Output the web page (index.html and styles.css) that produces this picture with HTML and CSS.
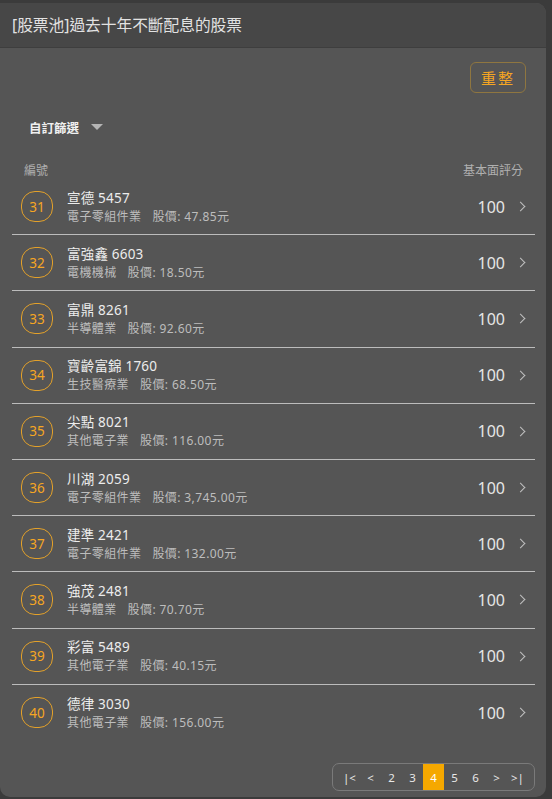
FILE: index.html
```html
<!DOCTYPE html>
<html lang="zh-Hant">
  <head>
    <meta charset="UTF-8" />
    <meta name="viewport" content="width=device-width, initial-scale=1.0" />
    <title>股票池</title>
    <link rel="stylesheet" href="styles.css">
  </head>
  <body>
    <div class="modal">
      <div class="modal-header">[股票池]過去十年不斷配息的股票</div>

      <div class="modal-body">
        <div class="toolbar">
          <button class="reset-btn">重整</button>
        </div>

        <div class="filter">
          <span>自訂篩選</span>
          <span class="caret"></span>
        </div>

        <div class="list-head">
          <span>編號</span>
          <span>基本面評分</span>
        </div>

        <ul class="stock-list">
          <li class="stock">
            <span class="rank">31</span>
            <div class="info">
              <div class="name">宣德 5457</div>
              <div class="meta">電子零組件業<span class="price">股價: 47.85元</span></div>
            </div>
            <span class="score">100</span>
            <span class="chevron"></span>
          </li>
          <li class="stock">
            <span class="rank">32</span>
            <div class="info">
              <div class="name">富強鑫 6603</div>
              <div class="meta">電機機械<span class="price">股價: 18.50元</span></div>
            </div>
            <span class="score">100</span>
            <span class="chevron"></span>
          </li>
          <li class="stock">
            <span class="rank">33</span>
            <div class="info">
              <div class="name">富鼎 8261</div>
              <div class="meta">半導體業<span class="price">股價: 92.60元</span></div>
            </div>
            <span class="score">100</span>
            <span class="chevron"></span>
          </li>
          <li class="stock">
            <span class="rank">34</span>
            <div class="info">
              <div class="name">寶齡富錦 1760</div>
              <div class="meta">生技醫療業<span class="price">股價: 68.50元</span></div>
            </div>
            <span class="score">100</span>
            <span class="chevron"></span>
          </li>
          <li class="stock">
            <span class="rank">35</span>
            <div class="info">
              <div class="name">尖點 8021</div>
              <div class="meta">其他電子業<span class="price">股價: 116.00元</span></div>
            </div>
            <span class="score">100</span>
            <span class="chevron"></span>
          </li>
          <li class="stock">
            <span class="rank">36</span>
            <div class="info">
              <div class="name">川湖 2059</div>
              <div class="meta">電子零組件業<span class="price">股價: 3,745.00元</span></div>
            </div>
            <span class="score">100</span>
            <span class="chevron"></span>
          </li>
          <li class="stock">
            <span class="rank">37</span>
            <div class="info">
              <div class="name">建準 2421</div>
              <div class="meta">電子零組件業<span class="price">股價: 132.00元</span></div>
            </div>
            <span class="score">100</span>
            <span class="chevron"></span>
          </li>
          <li class="stock">
            <span class="rank">38</span>
            <div class="info">
              <div class="name">強茂 2481</div>
              <div class="meta">半導體業<span class="price">股價: 70.70元</span></div>
            </div>
            <span class="score">100</span>
            <span class="chevron"></span>
          </li>
          <li class="stock">
            <span class="rank">39</span>
            <div class="info">
              <div class="name">彩富 5489</div>
              <div class="meta">其他電子業<span class="price">股價: 40.15元</span></div>
            </div>
            <span class="score">100</span>
            <span class="chevron"></span>
          </li>
          <li class="stock">
            <span class="rank">40</span>
            <div class="info">
              <div class="name">德律 3030</div>
              <div class="meta">其他電子業<span class="price">股價: 156.00元</span></div>
            </div>
            <span class="score">100</span>
            <span class="chevron"></span>
          </li>
        </ul>

        <div class="pager-row">
          <div class="pager">
            <span class="page">|&lt;</span>
            <span class="page">&lt;</span>
            <span class="page">2</span>
            <span class="page">3</span>
            <span class="page active">4</span>
            <span class="page">5</span>
            <span class="page">6</span>
            <span class="page">&gt;</span>
            <span class="page">&gt;|</span>
          </div>
        </div>
      </div>
    </div>
  </body>
</html>
```

FILE: styles.css
```css
* {
  margin: 0;
  padding: 0;
  box-sizing: border-box;
}

body {
  font-family: "Noto Sans", "Noto Sans CJK TC", sans-serif;
  background: #3b3b3b;
  height: 799px;
  overflow: hidden;
}

.modal {
  margin: 3px 6px 0 0;
  height: 794px;
  background: #555555;
  border-radius: 0 10px 10px 10px;
  overflow: hidden;
  display: flex;
  flex-direction: column;
}

.modal-header {
  height: 45px;
  background: #474747;
  border-bottom: 1px solid #3e3e3e;
  color: #e2e2e2;
  font-size: 15.7px;
  line-height: 44px;
  padding: 0 12px;
}

.modal-body {
  flex: 1;
  padding: 14px 11px 0 12px;
  display: flex;
  flex-direction: column;
}

.toolbar {
  display: flex;
  justify-content: flex-end;
  padding-right: 9px;
}

.reset-btn {
  font-family: inherit;
  width: 56px;
  height: 31px;
  background: transparent;
  border: 1px solid #8f7640;
  border-radius: 6px;
  color: #f5a623;
  font-size: 15px;
  letter-spacing: 2px;
  cursor: pointer;
}

.filter {
  display: flex;
  align-items: center;
  gap: 12px;
  margin-top: 24px;
  padding-left: 17px;
  height: 20px;
  color: #f0f0f0;
  font-size: 12.5px;
  font-weight: bold;
}

.caret {
  width: 0;
  height: 0;
  border-left: 6px solid transparent;
  border-right: 6px solid transparent;
  border-top: 6px solid #b5b5b5;
}

.list-head {
  display: flex;
  justify-content: space-between;
  margin-top: 26px;
  padding: 0 12px 0 12px;
  color: #b0b0b0;
  font-size: 12px;
  height: 16px;
  line-height: 16px;
}

.stock-list {
  list-style: none;
}

.stock {
  display: flex;
  align-items: center;
  height: 56.2px;
  padding: 0 11px 0 9px;
  border-bottom: 1px solid #bcbcbc;
}

.stock:last-child {
  border-bottom: none;
}

.rank {
  width: 32px;
  height: 31px;
  border: 1px solid #e3a12a;
  border-radius: 14px;
  color: #f5a623;
  font-size: 13.5px;
  display: flex;
  align-items: center;
  justify-content: center;
}

.info {
  flex: 1;
  margin-left: 14px;
}

.name {
  color: #ececec;
  font-size: 13.5px;
  line-height: 19px;
  letter-spacing: 0.2px;
}

.meta {
  color: #bdbdbd;
  font-size: 12px;
  line-height: 17px;
  letter-spacing: 0.4px;
}

.price {
  margin-left: 11px;
}

.score {
  color: #e6e6e6;
  font-size: 16px;
}

.chevron {
  width: 7px;
  height: 7px;
  border-top: 1.5px solid #c0c0c0;
  border-right: 1.5px solid #c0c0c0;
  transform: rotate(45deg);
  margin-left: 12px;
}

.pager-row {
  margin-top: auto;
  margin-bottom: 6px;
  display: flex;
  justify-content: flex-end;
}

.pager {
  display: flex;
  height: 28px;
  border: 1px solid #7a7a7a;
  border-radius: 7px;
  padding: 0 6px;
}

.page {
  width: 21px;
  display: flex;
  align-items: center;
  justify-content: center;
  color: #e8e8e8;
  font-size: 11.5px;
}

.page.active {
  background: #f5a800;
  color: #ffffff;
}
```
